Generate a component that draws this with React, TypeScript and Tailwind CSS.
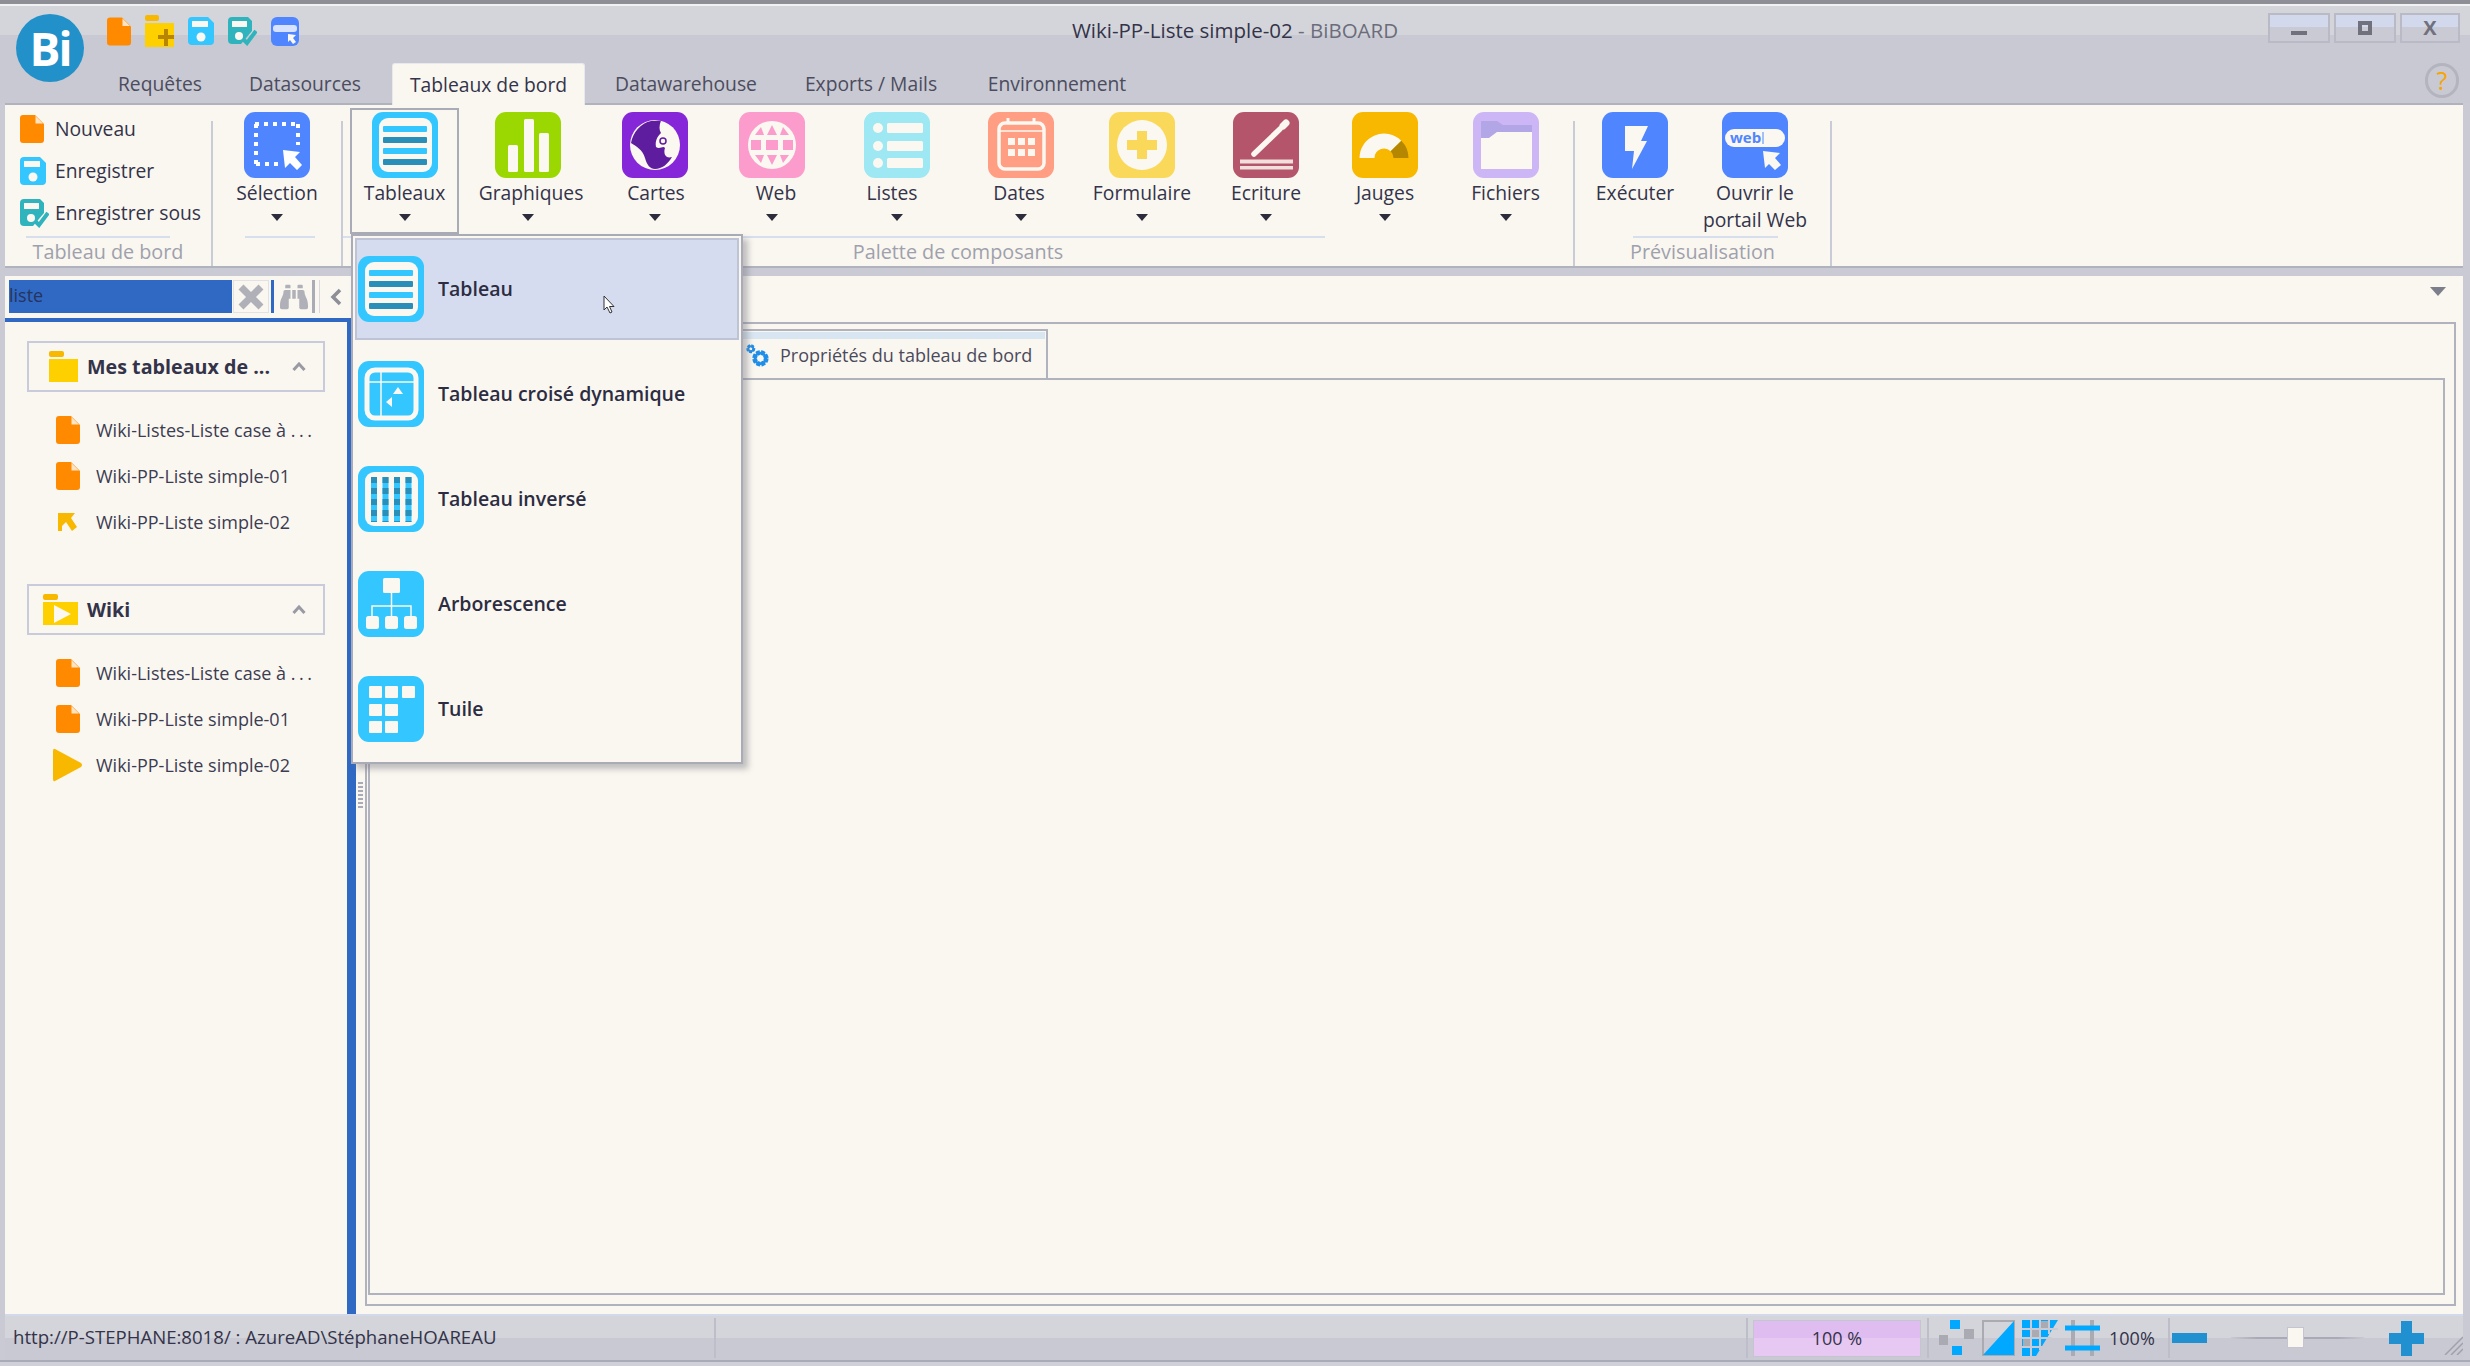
import React from 'react';
import { FaBinoculars } from 'react-icons/fa';

const Tile = ({ bg, children }: { bg: string; children: React.ReactNode }) => (
  <svg viewBox="0 0 66 66" className="w-[66px] h-[66px] shrink-0">
    <rect width="66" height="66" rx="11" fill={bg} />
    {children}
  </svg>
);

const SelectionIcon = () => (
  <Tile bg="#4f86ff">
    <path d="M11 12H55M12 12V52M12 52H37M54 12V33" stroke="#fff" strokeWidth="4" strokeDasharray="4 5" fill="none" />
    <path d="M39 38L56 40L51 45L58 53L53 58L46 51L41 56Z" fill="#fff" />
  </Tile>
);

const TableIcon = () => (
  <Tile bg="#33c6ff">
    <rect x="7" y="6" width="53" height="54" rx="9" fill="#fbf8f1" />
    <rect x="11" y="14" width="44" height="6" rx="1" fill="#33c6ff" />
    <rect x="11" y="25" width="44" height="6" rx="1" fill="#2a8fb8" />
    <rect x="11" y="36" width="44" height="6" rx="1" fill="#33c6ff" />
    <rect x="11" y="47" width="44" height="6" rx="1" fill="#2a8fb8" />
  </Tile>
);

const PivotIcon = () => (
  <Tile bg="#33c6ff">
    <rect x="9" y="9" width="49" height="48" rx="8" fill="none" stroke="#fbf8f1" strokeWidth="5" />
    <path d="M11 21H56M23 11V55" stroke="#fbf8f1" strokeWidth="1.5" />
    <path d="M40 26L45 33H35Z" fill="#fbf8f1" />
    <path d="M28 41L34 36V46Z" fill="#fbf8f1" />
  </Tile>
);

const InvertedIcon = () => (
  <Tile bg="#33c6ff">
    <rect x="7" y="6" width="53" height="54" rx="9" fill="#fbf8f1" />
    {[16, 27.5, 39, 50.5].map((x) => (
      <g key={x}>
        <line x1={x} y1="11" x2={x} y2="56" stroke="#33c6ff" strokeWidth="6" />
        <line x1={x} y1="11" x2={x} y2="56" stroke="#2a8fb8" strokeWidth="6" strokeDasharray="6 5" />
      </g>
    ))}
  </Tile>
);

const TreeIcon = () => (
  <Tile bg="#33c6ff">
    <rect x="25" y="7" width="17" height="15" rx="1.5" fill="#fbf8f1" />
    <path d="M33.5 22V45M14 45V35H53V45" stroke="#fbf8f1" strokeWidth="1.5" fill="none" />
    <rect x="8" y="45" width="13" height="13" rx="2.5" fill="#fbf8f1" />
    <rect x="27" y="45" width="13" height="13" rx="2.5" fill="#fbf8f1" />
    <rect x="46" y="45" width="13" height="13" rx="2.5" fill="#fbf8f1" />
  </Tile>
);

const TileIcon = () => (
  <Tile bg="#33c6ff">
    {[
      [11, 10],
      [27, 10],
      [44, 10],
      [11, 28],
      [27, 28],
      [11, 45],
      [27, 45],
    ].map(([x, y]) => (
      <rect key={`${x}-${y}`} x={x} y={y} width="13" height="12" rx="1" fill="#fbf8f1" />
    ))}
  </Tile>
);

const ChartIcon = () => (
  <Tile bg="#9bd700">
    <rect x="13" y="33" width="10" height="27" rx="1.5" fill="#fbf8f1" />
    <rect x="29" y="7" width="10" height="53" rx="1.5" fill="#fbf8f1" />
    <rect x="44" y="21" width="10" height="39" rx="1.5" fill="#fbf8f1" />
  </Tile>
);

const MapIcon = () => (
  <Tile bg="#8526d9">
    <circle cx="33" cy="33" r="25" fill="#fbf8f1" />
    <path
      d="M29 9L39 8.5C37 14 37 18 39 21C35 25 33 29 34 35C38 38 41 33 43 36C41 42 44 47 50 45C46 52 40 57 33 57C28 57 25 53 23 46C21 38 14 34 9 31C11 20 19 11 29 9Z"
      fill="#5d1d9e"
    />
    <circle cx="41" cy="29" r="3" fill="none" stroke="#5d1d9e" strokeWidth="1.5" />
  </Tile>
);

const WebIcon = () => (
  <Tile bg="#fb9ccd">
    <circle cx="33" cy="33" r="24" fill="#fbf8f1" />
    <rect x="12" y="28" width="10" height="10" fill="#fb9ccd" />
    <rect x="27" y="28" width="12" height="10" fill="#fb9ccd" />
    <rect x="44" y="28" width="10" height="10" fill="#fb9ccd" />
    <path d="M33 13L38 23H28ZM33 53L38 43H28ZM22 15L25 23H16ZM44 15L41 23H50ZM22 51L25 43H16ZM44 51L41 43H50Z" fill="#fb9ccd" />
  </Tile>
);

const ListIcon = () => (
  <Tile bg="#9de8f2">
    {[16, 34, 51].map((y) => (
      <g key={y}>
        <circle cx="14" cy={y} r="5" fill="#fbf8f1" />
        <rect x="23" y={y - 5} width="36" height="10" rx="1.5" fill="#fbf8f1" />
      </g>
    ))}
  </Tile>
);

const DateIcon = () => (
  <Tile bg="#ff9e82">
    <rect x="11" y="11" width="45" height="46" rx="6" fill="none" stroke="#fbf8f1" strokeWidth="3.5" />
    <path d="M20 6V12M46 6V12" stroke="#fbf8f1" strokeWidth="3" />
    <path d="M11 19H56" stroke="#fbf8f1" strokeWidth="1.5" />
    {[20, 30, 40].map((x) =>
      [26, 37].map((y) => <rect key={`${x}-${y}`} x={x} y={y} width="7" height="7" fill="#fbf8f1" />)
    )}
  </Tile>
);

const FormIcon = () => (
  <Tile bg="#fad95a">
    <circle cx="33" cy="33" r="25" fill="#fbf8f1" />
    <path d="M28 19H38V28H48V38H38V47H28V38H18V28H28Z" fill="#fad95a" />
  </Tile>
);

const WriteIcon = () => (
  <Tile bg="#b5556b">
    <path d="M21 42L47 17" stroke="#fbf8f1" strokeWidth="5.5" strokeLinecap="round" />
    <path d="M50 14L53 11" stroke="#fbf8f1" strokeWidth="7" strokeLinecap="round" />
    <rect x="7" y="47.5" width="53" height="4" fill="#f1dfdc" />
    <rect x="7" y="54" width="53" height="3.5" fill="#f1dfdc" />
  </Tile>
);

const GaugeIcon = () => (
  <Tile bg="#f8b800">
    <path d="M15 46A17 17 0 0 1 44 34" stroke="#fbf8f1" strokeWidth="15" fill="none" />
    <path d="M44 34A17 17 0 0 1 49 46" stroke="#b58700" strokeWidth="15" fill="none" />
  </Tile>
);

const FilesIcon = () => (
  <Tile bg="#ccb6f5">
    <path d="M8 9H24L30 13H59V20H24L16 26H8Z" fill="#b3a6e6" />
    <path d="M8 26H16L24 20H59V57H8Z" fill="#fbf8f1" />
  </Tile>
);

const RunIcon = () => (
  <Tile bg="#4f86ff">
    <path d="M23 14H46L39 29H45L30 57L32 39H23Z" fill="#fbf8f1" />
  </Tile>
);

const PortalIcon = () => (
  <Tile bg="#4f86ff">
    <rect x="3" y="17" width="60" height="18" rx="9" fill="#fbf8f1" />
    <text x="8" y="31" fontSize="15" fontWeight="700" fill="#4f86ff" fontFamily="'Open Sans', sans-serif">
      web
    </text>
    <line x1="41" y1="20" x2="41" y2="32" stroke="#4f86ff" strokeWidth="1" />
    <path d="M41 39L58 41L53 46L59 53L53 58L47 52L43 56Z" fill="#fbf8f1" />
  </Tile>
);

const DocIcon = ({ className }: { className?: string }) => (
  <svg viewBox="0 0 24 28" className={className ?? 'w-[24px] h-[28px] shrink-0'}>
    <path d="M3 0H15L24 9V25a3 3 0 0 1-3 3H3a3 3 0 0 1-3-3V3a3 3 0 0 1 3-3Z" fill="#ff8a00" />
    <path d="M15.5 1V8.5H23Z" fill="#ffe3c2" />
  </svg>
);

const SaveIcon = () => (
  <svg viewBox="0 0 26 28" className="w-[26px] h-[28px] shrink-0">
    <path d="M4 0H20L26 6V24a4 4 0 0 1-4 4H4a4 4 0 0 1-4-4V4a4 4 0 0 1 4-4Z" fill="#33c6ff" />
    <rect x="4" y="4" width="16" height="6" fill="#fbf8f1" />
    <circle cx="13" cy="20" r="4.5" fill="#fbf8f1" />
  </svg>
);

const SaveAsIcon = () => (
  <svg viewBox="0 0 29 29" className="w-[29px] h-[29px] shrink-0">
    <path d="M4 0H20L24 4V14L13 27H4a4 4 0 0 1-4-4V4a4 4 0 0 1 4-4Z" fill="#2fb4bd" />
    <rect x="4" y="4" width="15" height="6" fill="#fbf8f1" />
    <circle cx="11" cy="19" r="4" fill="#fbf8f1" />
    <path d="M15 22L19 26L28 14" stroke="#2fb4bd" strokeWidth="4" fill="none" />
  </svg>
);

const NewFolderIcon = () => (
  <svg viewBox="0 0 29 32" className="w-[29px] h-[32px] shrink-0">
    <rect x="0" y="0" width="14" height="6" rx="2" fill="#f8b800" />
    <rect x="0" y="8" width="29" height="24" fill="#ffd000" />
    <path d="M19 14H23V20H29V24H23V31H19V24H13V20H19Z" fill="#b88500" />
  </svg>
);

const PortalSmallIcon = () => (
  <svg viewBox="0 0 28 29" className="w-[28px] h-[29px] shrink-0">
    <rect width="28" height="29" rx="6" fill="#4f86ff" />
    <rect x="2" y="8" width="24" height="7" rx="3" fill="#d6e2ff" />
    <path d="M17 17L25 18L22 21L25 25L22 27L19 23L17 25Z" fill="#fbf8f1" />
  </svg>
);

const FolderIcon = () => (
  <svg viewBox="0 0 29 31" className="w-[29px] h-[31px] shrink-0">
    <rect x="0" y="0" width="15" height="6" rx="2" fill="#f8b800" />
    <rect x="0" y="8" width="29" height="23" fill="#ffd000" />
  </svg>
);

const PlayFolderIcon = () => (
  <svg viewBox="0 0 35 31" className="w-[35px] h-[31px] shrink-0">
    <rect x="0" y="0" width="15" height="6" rx="2" fill="#f8b800" />
    <rect x="0" y="8" width="35" height="23" fill="#ffd000" />
    <path d="M11 11L28 20L11 29Z" fill="#fbf8f1" />
  </svg>
);

const ArrowItemIcon = () => (
  <svg viewBox="0 0 19 19" className="w-[19px] h-[19px] shrink-0">
    <path d="M0 0H17L13 5L19 14L14 18L8 9L4 13V18H0Z" fill="#f8b800" />
  </svg>
);

const PlayItemIcon = () => (
  <svg viewBox="0 0 30 36" className="w-[30px] h-[36px] shrink-0">
    <path d="M2 2L28 16Q30 18 28 20L2 34Q0 35 0 32V4Q0 1 2 2Z" fill="#f8b800" />
  </svg>
);

const DropArrow = () => <div className="w-0 h-0 border-x-[6px] border-x-transparent border-t-[7px] border-t-[#2c2c3c]" />;

const RibbonButton = ({
  icon,
  label,
  width,
  labelClass,
  arrow = true,
  active = false,
}: {
  icon: React.ReactNode;
  label: React.ReactNode;
  width: string;
  labelClass?: string;
  arrow?: boolean;
  active?: boolean;
}) => (
  <div
    className={`${width} h-[126px] shrink-0 flex flex-col items-center pt-[2px] border-2 ${
      active ? 'border-[#a9abb6]' : 'border-transparent'
    }`}
  >
    {icon}
    <div className={`mt-[1px] text-center text-[19.3px] leading-[27px] text-[#33334a] whitespace-nowrap ${labelClass ?? ''}`}>{label}</div>
    {arrow && (
      <div className="mt-[8px]">
        <DropArrow />
      </div>
    )}
  </div>
);

const RibbonGroup = ({
  width,
  caption,
  line,
  children,
}: {
  width: string;
  caption: string;
  line: string;
  children: React.ReactNode;
}) => (
  <div className={`${width} shrink-0 flex`}>
    <div className="flex-1 min-w-0 flex flex-col">
      <div className="h-[131px] pt-[3px] flex">{children}</div>
      <div className={`h-[2px] bg-[#d7deee] ${line}`} />
      <div className="flex-1 text-center text-[19.8px] leading-[27px] text-[#9ea1ad] whitespace-nowrap">{caption}</div>
    </div>
    <div className="w-[2px] mt-[16px] bg-[#c9cbd6]" />
  </div>
);

const SmallAction = ({ icon, label }: { icon: React.ReactNode; label: string }) => (
  <div className="h-[42px] flex items-center text-[19.3px] text-[#33334a] whitespace-nowrap">
    <div className="w-[50px] pl-[15px]">{icon}</div>
    {label}
  </div>
);

const WindowButton = ({ width, children }: { width: string; children: React.ReactNode }) => (
  <div className={`${width} h-[30px] relative border-2 border-[#b9bac5] bg-[linear-gradient(#d3d9ec_0%,#d3d9ec_45%,#c9cad3_45%,#c9cad3_100%)] flex items-center justify-center`}>
    {children}
  </div>
);

const TreeHeader = ({ icon, label }: { icon: React.ReactNode; label: string }) => (
  <div className="mx-[22px] h-[51px] border-2 border-[#c9cbda] flex items-center relative">
    <div className="w-[58px] flex justify-end pr-[9px] shrink-0">{icon}</div>
    <span className="text-[19.7px] font-bold text-[#33334a] whitespace-nowrap">{label}</span>
    <svg viewBox="0 0 14 9" className="w-[14px] h-[9px] ml-auto mr-[17px]">
      <path d="M1.5 8L7 2L12.5 8" stroke="#9a9aa5" strokeWidth="3" fill="none" />
    </svg>
  </div>
);

const TreeItem = ({ icon, label }: { icon: React.ReactNode; label: React.ReactNode }) => (
  <div className="h-[46px] flex items-center">
    <div className="w-[91px] pl-[34px] h-full flex items-center justify-center shrink-0">{icon}</div>
    <span className="text-[18px] text-[#3c3c52] whitespace-nowrap">{label}</span>
  </div>
);

const truncatedLabel = (
  <>
    Wiki-Listes-Liste case à <span className="tracking-[3.5px]">...</span>
  </>
);

const MenuRow = ({ icon, label, hovered = false }: { icon: React.ReactNode; label: string; hovered?: boolean }) => (
  <div
    className={`relative mx-[2px] my-[1.5px] h-[102px] shrink-0 border-2 pl-[1px] flex items-center gap-[14px] ${
      hovered ? 'bg-[#d6dcf0] border-[#bec3d6]' : 'border-transparent'
    }`}
  >
    {icon}
    <span className="text-[19.5px] font-semibold text-[#2c2c42] whitespace-nowrap">{label}</span>
    {hovered && (
      <svg viewBox="0 0 12 19" className="absolute left-[246px] top-[55px] w-[12px] h-[19px]">
        <path d="M1 1V15L4 12L7 18L9 17L6.5 11.5H11Z" fill="#fff" stroke="#333" strokeWidth="1" />
      </svg>
    )}
  </div>
);

const StatusSep = () => <div className="w-[2px] h-[40px] bg-[#bdbec9] shrink-0" />;

export default function App() {
  return (
    <div className="w-[2470px] h-[1366px] relative flex flex-col overflow-hidden bg-[#c9cad3] font-['Open_Sans',sans-serif]">
      <div className="h-[4px] bg-[#8d8e96] shrink-0" />
      <div className="h-[2px] bg-[#f1f1f4] shrink-0" />

      {/* Title bar and tabs */}
      <div className="h-[97px] shrink-0 flex bg-[linear-gradient(#d4d5da_0%,#d4d5da_30%,#c8c9d2_30%,#c8c9d2_100%)]">
        <div className="w-[84px] pl-[16px] pt-[8px] shrink-0">
          <div className="w-[68px] h-[68px] rounded-full bg-[#2391c9] flex items-center justify-center text-white text-[46px] font-bold tracking-[-2px]">
            Bi
          </div>
        </div>
        <div className="flex-1 min-w-0 flex flex-col">
          <div className="h-[57px] flex items-start">
            <div className="w-[250px] shrink-0 pl-[23px] pt-[9px] flex items-center gap-[14px]">
              <DocIcon className="w-[24px] h-[29px] shrink-0" />
              <NewFolderIcon />
              <SaveIcon />
              <SaveAsIcon />
              <PortalSmallIcon />
            </div>
            <div className="flex-1 text-center text-[20.5px] leading-[48px] text-[#33334a] whitespace-nowrap">
              Wiki-PP-Liste simple-02 <span className="text-[#6b6c7c]">- BiBOARD</span>
            </div>
            <div className="w-[334px] shrink-0 pt-[7px] pr-[10px] flex justify-end gap-[4px]">
              <WindowButton width="w-[62px]">
                <div className="w-[16px] h-[4px] bg-[#70717d] mt-[10px]" />
              </WindowButton>
              <WindowButton width="w-[62px]">
                <div className="w-[14px] h-[14px] border-[4px] border-[#70717d]" />
              </WindowButton>
              <WindowButton width="w-[60px]">
                <span className="text-[20px] font-bold text-[#70717d] leading-none">X</span>
              </WindowButton>
            </div>
          </div>
          <div className="h-[40px] flex items-stretch pl-[16px] text-[19.3px] text-[#4c4c5e] whitespace-nowrap">
            <div className="w-[120px] pt-[2px] flex items-center justify-center">Requêtes</div>
            <div className="w-[170px] pt-[2px] flex items-center justify-center">Datasources</div>
            <div className="w-[2px]" />
            <div className="w-[193px] h-[42px] pt-[1px] relative z-10 flex items-center justify-center rounded-t-[3px] bg-[#faf7f0] border-x border-t border-[#e8e8ee] text-[#33334a]">
              Tableaux de bord
            </div>
            <div className="w-[202px] pt-[2px] flex items-center justify-center">Datawarehouse</div>
            <div className="w-[168px] pt-[2px] flex items-center justify-center">Exports / Mails</div>
            <div className="w-[204px] pt-[2px] flex items-center justify-center">Environnement</div>
            <div className="ml-auto mr-[11px] w-[34px] h-[35px] rounded-full border-[3px] border-[#b3b4bd] flex items-center justify-center text-[25px] leading-none text-[#f8a500]">
              ?
            </div>
          </div>
        </div>
      </div>

      {/* Ribbon */}
      <div className="h-[165px] shrink-0 ml-[5px] mr-[7px] flex bg-[#faf7f0] border-t-2 border-b-2 border-[#b0b2bd]">
        <RibbonGroup width="w-[208px]" caption="Tableau de bord" line="ml-[21px] w-[144px]">
          <div className="flex flex-col">
            <SmallAction icon={<DocIcon />} label="Nouveau" />
            <SmallAction icon={<SaveIcon />} label="Enregistrer" />
            <SmallAction icon={<SaveAsIcon />} label="Enregistrer sous" />
          </div>
        </RibbonGroup>
        <RibbonGroup width="w-[130px]" caption="" line="ml-[32px] w-[70px]">
          <RibbonButton width="w-[128px]" icon={<SelectionIcon />} label="Sélection" />
        </RibbonGroup>
        <RibbonGroup width="w-[1232px]" caption="Palette de composants" line="w-[982px]">
          <div className="w-[7px] shrink-0" />
          <RibbonButton active width="w-[109px]" icon={<TableIcon />} label="Tableaux" />
          <RibbonButton width="w-[137px]" icon={<ChartIcon />} label="Graphiques" labelClass="ml-[7px]" />
          <RibbonButton width="w-[117px]" icon={<MapIcon />} label="Cartes" labelClass="ml-[3px]" />
          <RibbonButton width="w-[118px]" icon={<WebIcon />} label="Web" labelClass="ml-[8px]" />
          <RibbonButton width="w-[131px]" icon={<ListIcon />} label="Listes" labelClass="mr-[9px]" />
          <RibbonButton width="w-[117px]" icon={<DateIcon />} label="Dates" labelClass="mr-[3px]" />
          <RibbonButton width="w-[126px]" icon={<FormIcon />} label="Formulaire" />
          <RibbonButton width="w-[122px]" icon={<WriteIcon />} label="Ecriture" />
          <RibbonButton width="w-[116px]" icon={<GaugeIcon />} label="Jauges" />
          <RibbonButton width="w-[125px]" icon={<FilesIcon />} label="Fichiers" />
        </RibbonGroup>
        <RibbonGroup width="w-[257px]" caption="Prévisualisation" line="ml-[58px] w-[145px]">
          <RibbonButton width="w-[120px]" arrow={false} icon={<RunIcon />} label="Exécuter" />
          <RibbonButton
            width="w-[120px]"
            arrow={false}
            icon={<PortalIcon />}
            label={
              <>
                Ouvrir le
                <br />
                portail Web
              </>
            }
          />
        </RibbonGroup>
      </div>

      <div className="h-[8px] shrink-0" />

      {/* Main area */}
      <div className="flex-1 min-h-0 ml-[5px] mr-[7px] flex bg-[#faf7f0]">
        {/* Left tree panel */}
        <div className="w-[351px] shrink-0 flex flex-col">
          <div className="h-[42px] shrink-0 pt-[4px] pl-[4px] flex items-start">
            <div className="w-[223px] h-[33px] bg-[#2f69c4] text-[18px] leading-[30px] text-[#27345c]">liste</div>
            <div className="w-[36px] h-[33px] ml-[1px] flex items-center justify-center border border-[#e2e2e6]">
              <svg viewBox="0 0 28 28" className="w-[28px] h-[28px]">
                <path d="M4 4L24 24M24 4L4 24" stroke="#b0b1b8" strokeWidth="7" />
              </svg>
            </div>
            <div className="w-[3px] h-[33px] ml-[2px] bg-[#2f69c4]" />
            <div className="w-[36px] h-[33px] ml-[2px] flex items-center justify-center text-[#b0b1b8]">
              <FaBinoculars size={28} />
            </div>
            <div className="w-[3px] h-[33px] bg-[#a9abb6]" />
            <div className="w-[33px] h-[33px] ml-[4px] flex items-center justify-center border-l border-[#d8d8de]">
              <svg viewBox="0 0 12 18" className="w-[12px] h-[18px]">
                <path d="M10 2L3 9L10 16" stroke="#8d8e98" strokeWidth="3.5" fill="none" />
              </svg>
            </div>
          </div>
          <div className="flex-1 min-h-0 flex">
            <div className="flex-1 min-w-0 border-t-4 border-[#2f69c4] pt-[19px]">
              <TreeHeader icon={<FolderIcon />} label="Mes tableaux de ..." />
              <div className="mt-[15px] mb-[39px]">
                <TreeItem icon={<DocIcon />} label={truncatedLabel} />
                <TreeItem icon={<DocIcon />} label="Wiki-PP-Liste simple-01" />
                <TreeItem icon={<ArrowItemIcon />} label="Wiki-PP-Liste simple-02" />
              </div>
              <TreeHeader icon={<PlayFolderIcon />} label="Wiki" />
              <div className="mt-[15px]">
                <TreeItem icon={<DocIcon />} label={truncatedLabel} />
                <TreeItem icon={<DocIcon />} label="Wiki-PP-Liste simple-01" />
                <TreeItem icon={<PlayItemIcon />} label="Wiki-PP-Liste simple-02" />
              </div>
            </div>
            <div className="w-[9px] bg-[#2f69c4] shrink-0" />
          </div>
        </div>

        {/* Splitter */}
        <div className="w-[9px] shrink-0 flex flex-col items-center justify-center gap-[2px]">
          {[0, 1, 2, 3, 4, 5, 6].map((i) => (
            <div key={i} className="w-[5px] h-[2px] bg-[#a8aab8]" />
          ))}
        </div>

        {/* Workspace */}
        <div className="flex-1 min-w-0 flex flex-col">
          <div className="h-[46px] shrink-0 pt-[11px] pr-[17px] flex justify-end">
            <div className="w-0 h-0 border-x-[8px] border-x-transparent border-t-[9px] border-t-[#7d7e8c]" />
          </div>
          <div className="flex-1 min-h-0 mr-[7px] mb-[8px] border-2 border-[#b0b2bd] flex flex-col">
            <div className="h-[54px] shrink-0 pt-[5px] pl-[353px]">
              <div className="w-[328px] h-[49px] border-t-2 border-r-2 border-[#b0b2bd] flex flex-col">
                <div className="h-[7px] mt-[1px] mr-[1px] bg-[#d8e6f2] shrink-0" />
                <div className="flex-1 flex items-center pl-[25px] pb-[6px] gap-[10px]">
                  <svg viewBox="0 0 26 26" className="w-[25px] h-[25px] shrink-0">
                    <circle cx="6" cy="6" r="3.2" fill="none" stroke="#1f8ee8" strokeWidth="3" strokeDasharray="2.6 1.2" />
                    <circle cx="6" cy="6" r="2.6" fill="none" stroke="#1f8ee8" strokeWidth="2" />
                    <circle cx="16" cy="16" r="6" fill="none" stroke="#1f8ee8" strokeWidth="5" strokeDasharray="3.5 1.2" />
                    <circle cx="16" cy="16" r="5.5" fill="none" stroke="#1f8ee8" strokeWidth="3" />
                  </svg>
                  <span className="text-[18px] text-[#4a4a5c] whitespace-nowrap">Propriétés du tableau de bord</span>
                </div>
              </div>
            </div>
            <div className="flex-1 min-h-0 ml-[1px] mr-[9px] mb-[9px] border-2 border-[#b0b2bd]" />
          </div>
        </div>
      </div>

      {/* Status bar */}
      <div className="h-[46px] shrink-0 ml-[5px] mr-[7px] flex items-center border-t-2 border-[#d3d8ea] text-[#33334a] bg-[linear-gradient(#d4d5da_0%,#d4d5da_50%,#c8c9d2_50%,#c8c9d2_100%)]">
        <div className="w-[709px] shrink-0 pl-[8px] pb-[2px] text-[18.6px] whitespace-nowrap">http://P-STEPHANE:8018/ : AzureAD\StéphaneHOAREAU</div>
        <StatusSep />
        <div className="flex-1" />
        <StatusSep />
        <div className="w-[168px] h-[37px] ml-[5px] shrink-0 flex items-center justify-center border border-[#c4c5d0] text-[18px] bg-[linear-gradient(#e0bdf0_0%,#e0bdf0_50%,#e6c8f3_50%,#e6c8f3_100%)]">
          100 %
        </div>
        <div className="ml-[6px] mr-[10px]">
          <StatusSep />
        </div>
        <svg viewBox="0 0 36 36" className="w-[36px] h-[36px] shrink-0">
          <rect x="11" y="0" width="10" height="9" fill="#00a8ff" />
          <rect x="0" y="15" width="9" height="10" fill="#a9aab2" />
          <rect x="25" y="9" width="10" height="10" fill="#a9aab2" />
          <rect x="13" y="26" width="10" height="9" fill="#00a8ff" />
        </svg>
        <svg viewBox="0 0 33 36" className="w-[33px] h-[36px] ml-[7px] shrink-0">
          <rect x="1" y="1" width="31" height="34" fill="none" stroke="#a9aab2" strokeWidth="2" />
          <path d="M32 1V35H1Z" fill="#00a8ff" />
        </svg>
        <svg viewBox="0 0 36 36" className="w-[36px] h-[36px] ml-[7px] shrink-0">
          <path d="M36 0L14 36H0V0Z" fill="#00a8ff" />
          <path d="M9 0V36M18 0V30M27 0V14M0 9H36M0 18H30M0 27H22" stroke="#c9cad3" strokeWidth="2" />
          <rect x="10" y="10" width="7" height="7" fill="#a9aab2" />
          <rect x="19" y="1" width="7" height="7" fill="#a9aab2" />
          <rect x="1" y="19" width="7" height="7" fill="#a9aab2" />
        </svg>
        <svg viewBox="0 0 35 36" className="w-[35px] h-[36px] ml-[7px] shrink-0">
          <path d="M8 0V36M27 0V36" stroke="#a9aab2" strokeWidth="4" />
          <path d="M0 8H35M0 28H35" stroke="#00a8ff" strokeWidth="5" />
        </svg>
        <div className="ml-[9px] w-[50px] text-[18px] whitespace-nowrap">100%</div>
        <div className="ml-[9px]">
          <StatusSep />
        </div>
        <div className="w-[35px] h-[10px] ml-[2px] bg-[#2090d0] shrink-0" />
        <div className="w-[133px] h-[2px] ml-[24px] relative bg-[linear-gradient(90deg,#c8c9d2,#a9aab5_20%,#a9aab5_80%,#c8c9d2)] shrink-0">
          <div className="absolute left-[56px] top-[-10px] w-[17px] h-[21px] bg-[#faf7f0] border border-[#c4c5d0]" />
        </div>
        <svg viewBox="0 0 35 35" className="w-[35px] h-[35px] ml-[25px] shrink-0">
          <path d="M12 0H23V12H35V23H23V35H12V23H0V12H12Z" fill="#2090d0" />
        </svg>
        <svg viewBox="0 0 20 20" className="w-[20px] h-[20px] ml-[19px] mt-[14px] shrink-0">
          <path d="M2 20L20 2M8 20L20 8M14 20L20 14" stroke="#a0a1ac" strokeWidth="1.5" />
        </svg>
      </div>
      <div className="h-[6px] shrink-0 border-t-2 border-[#a9abb6] bg-[#d0d0d8]" />

      {/* Tableaux dropdown */}
      <div className="absolute left-[351px] top-[234px] w-[392px] h-[530px] z-20 flex flex-col bg-[#faf7f0] border-2 border-[#a9abb6] shadow-[5px_5px_6px_rgba(120,120,130,0.45)]">
        <MenuRow hovered icon={<TableIcon />} label="Tableau" />
        <MenuRow icon={<PivotIcon />} label="Tableau croisé dynamique" />
        <MenuRow icon={<InvertedIcon />} label="Tableau inversé" />
        <MenuRow icon={<TreeIcon />} label="Arborescence" />
        <MenuRow icon={<TileIcon />} label="Tuile" />
      </div>
    </div>
  );
}
